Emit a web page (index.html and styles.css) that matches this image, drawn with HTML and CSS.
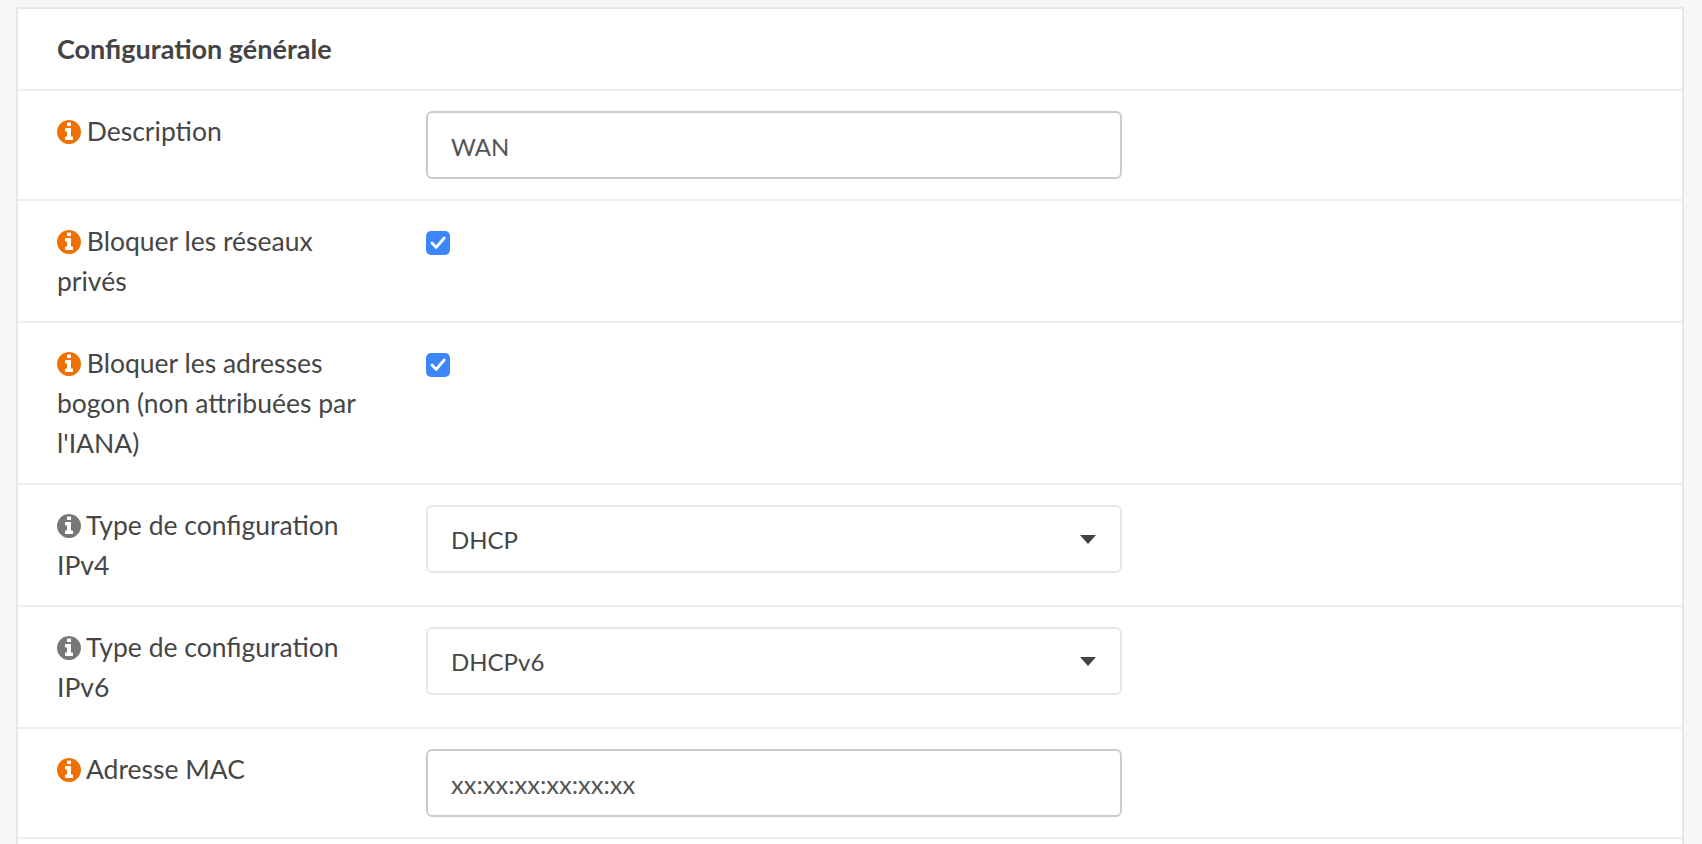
FILE: index.html
```html
<!DOCTYPE html>
<html lang="fr">
<head>
<meta charset="utf-8">
<title>Configuration générale</title>
<link rel="stylesheet" href="styles.css">
</head>
<body>
<svg class="defs" aria-hidden="true"><symbol id="info" viewBox="128 128 1536 1536"><path d="M1152 1376v-160q0-14-9-23t-23-9h-96v-512q0-14-9-23t-23-9h-320q-14 0-23 9t-9 23v160q0 14 9 23t23 9h96v320h-96q-14 0-23 9t-9 23v160q0 14 9 23t23 9h448q14 0 23-9t9-23zm-128-896v-160q0-14-9-23t-23-9h-192q-14 0-23 9t-9 23v160q0 14 9 23t23 9h192q14 0 23-9t9-23zm640 416q0 209-103 385.5t-279.5 279.5-385.5 103-385.5-103-279.5-279.5-103-385.5 103-385.5 279.5-279.5 385.5-103 385.5 103 279.5 279.5 103 385.5z"/></symbol></svg>
<main class="panel">
  <h2 class="panel-title">Configuration générale</h2>
  <div class="row">
    <div class="label"><svg class="info orange"><use href="#info"/></svg> Description</div>
    <div class="field"><input class="text-input" type="text" value="WAN"></div>
  </div>
  <div class="row">
    <div class="label"><svg class="info orange"><use href="#info"/></svg> Bloquer les réseaux privés</div>
    <div class="field"><span class="check"><svg viewBox="0 0 24 24"><path d="M6 12l4.2 4.4L18.2 7"/></svg></span></div>
  </div>
  <div class="row">
    <div class="label"><svg class="info orange"><use href="#info"/></svg> Bloquer les adresses bogon (non attribuées par l'IANA)</div>
    <div class="field"><span class="check"><svg viewBox="0 0 24 24"><path d="M6 12l4.2 4.4L18.2 7"/></svg></span></div>
  </div>
  <div class="row">
    <div class="label"><svg class="info gray"><use href="#info"/></svg> Type de configuration IPv4</div>
    <div class="field"><div class="select"><span>DHCP</span><i class="caret"></i></div></div>
  </div>
  <div class="row">
    <div class="label"><svg class="info gray"><use href="#info"/></svg> Type de configuration IPv6</div>
    <div class="field"><div class="select"><span>DHCPv6</span><i class="caret"></i></div></div>
  </div>
  <div class="row">
    <div class="label"><svg class="info orange"><use href="#info"/></svg> Adresse MAC</div>
    <div class="field"><input class="text-input mac" type="text" value="xx:xx:xx:xx:xx:xx"></div>
  </div>
</main>
</body>
</html>
```
FILE: styles.css
```css
* { box-sizing: border-box; }
html, body { height: 100%; }
body {
  margin: 0;
  padding: 7px 18px 0 16px;
  background: #f7f7f7;
  color: #464646;
  font-family: Lato, "Noto Sans", sans-serif;
  font-size: 26.5px;
  line-height: 40px;
  overflow: hidden;
}
.defs { display: none; }
.panel {
  background: #fff;
  border: 2px solid #e7e7e7;
  border-bottom: 0;
  height: 837px;
}
.panel-title {
  margin: 0;
  height: 82px;
  padding: 20px 0 0 39px;
  font-size: 27px;
  font-weight: 700;
  color: #444;
  border-bottom: 2px solid #eee;
}
.row {
  display: grid;
  grid-template-columns: 408px 696px;
  padding: 20px 0;
  border-bottom: 2px solid #eee;
}
.label { padding: 0 44px 0 39px; min-width: 0; }
.info { width: 24px; height: 24px; vertical-align: -3px; margin-right: -1px; }
.orange { fill: #ee7003; }
.gray { fill: #777; }
.text-input {
  display: block;
  width: 100%;
  height: 68px;
  padding: 2px 23px 0;
  border: 2px solid #ccc;
  border-radius: 6px;
  background: #fff;
  color: #555;
  font: inherit;
  font-size: 24px;
  outline: 0;
}
.mac { font-size: 25.5px; }
.select {
  display: flex;
  align-items: center;
  justify-content: space-between;
  height: 68px;
  padding: 2px 24px 0 23px;
  border: 2px solid #e7e7e7;
  border-radius: 6px;
  color: #464646;
  font-size: 24px;
}
.caret {
  width: 0;
  height: 0;
  margin-top: -2px;
  border-left: 8px solid transparent;
  border-right: 8px solid transparent;
  border-top: 9px solid #444;
}
.check {
  display: block;
  width: 24px;
  height: 24px;
  margin-top: 10px;
  border-radius: 5px;
  background: #3b86fb;
}
.check svg { display: block; width: 24px; height: 24px; fill: none; stroke: #fff; stroke-width: 2.8; stroke-linecap: round; stroke-linejoin: round; }
```
